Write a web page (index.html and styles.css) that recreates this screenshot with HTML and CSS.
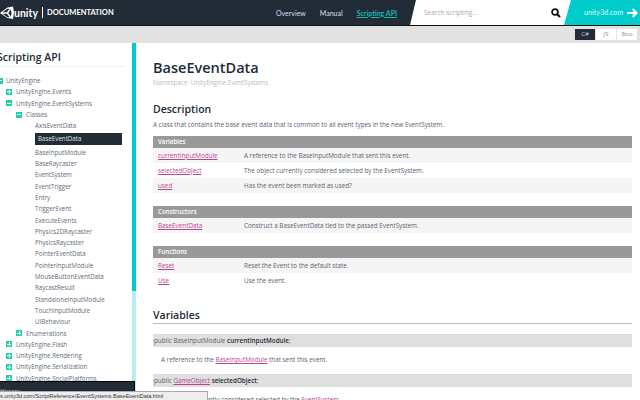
FILE: index.html
```html
<!DOCTYPE html>
<html lang="en">
<head>
<meta charset="utf-8">
<title>BaseEventData</title>
<link rel="stylesheet" href="styles.css">
</head>
<body>
<header class="header">
  <div class="brand">
    <svg class="logo" width="14" height="14" viewBox="0 0 14 14"><path d="M0 7 7.500 1.500 13 .5l1 6-1 6.500-5.500-1z" fill="#fff"/><path d="M2.500 6.200 7.500 2.800l2 .1L6.800 6.200zM2.500 7.800 7.500 11.200l2-.1L6.800 7.800zM8.300 7 10.700 3.500l.9 3.500-.9 3.500z" fill="#222c37"/></svg>
    <span class="word">unity</span>
    <span class="sep"></span>
    <span class="doc">DOCUMENTATION</span>
  </div>
  <nav class="nav">
    <a>Overview</a>
    <a>Manual</a>
    <a class="active">Scripting API</a>
  </nav>
  <div class="search">
    <span class="ph">Search scripting...</span>
    <svg width="10" height="10" viewBox="0 0 10 10"><circle cx="4" cy="4" r="2.900" fill="none" stroke="#111" stroke-width="1.800"/><path d="M6 6l3 3" stroke="#111" stroke-width="2.200"/></svg>
  </div>
  <div class="site">
    <span>unity3d.com</span>
    <svg width="11" height="10" viewBox="0 0 11 10"><path d="M0 5h8M5.500 1 9.500 5 5.500 9" fill="none" stroke="#fff" stroke-width="2.200"/></svg>
  </div>
</header>
<div class="langbar">
  <span class="lang on">C#</span><span class="lang">JS</span><span class="lang">Boo</span>
</div>
<div class="main">
  <aside class="side">
    <div class="side-inner">
      <h2 class="side-title">Scripting API</h2>
      <ul class="tree">
        <li class="n0"><i class="box minus"></i>UnityEngine</li>
        <li class="n1"><i class="box"></i>UnityEngine.Events</li>
        <li class="n1"><i class="box minus"></i>UnityEngine.EventSystems</li>
        <li class="n2"><i class="box minus"></i>Classes</li>
        <li class="n3">AxisEventData</li>
        <li class="n3 sel"><span>BaseEventData</span></li>
        <li class="n3">BaseInputModule</li>
        <li class="n3">BaseRaycaster</li>
        <li class="n3">EventSystem</li>
        <li class="n3">EventTrigger</li>
        <li class="n3">Entry</li>
        <li class="n3">TriggerEvent</li>
        <li class="n3">ExecuteEvents</li>
        <li class="n3">Physics2DRaycaster</li>
        <li class="n3">PhysicsRaycaster</li>
        <li class="n3">PointerEventData</li>
        <li class="n3">PointerInputModule</li>
        <li class="n3">MouseButtonEventData</li>
        <li class="n3">RaycastResult</li>
        <li class="n3">StandaloneInputModule</li>
        <li class="n3">TouchInputModule</li>
        <li class="n3">UIBehaviour</li>
        <li class="n2"><i class="box"></i>Enumerations</li>
        <li class="n1"><i class="box"></i>UnityEngine.Flash</li>
        <li class="n1"><i class="box"></i>UnityEngine.Rendering</li>
        <li class="n1"><i class="box"></i>UnityEngine.Serialization</li>
        <li class="n1"><i class="box"></i>UnityEngine.SocialPlatforms</li>
      </ul>
    </div>
    <div class="track"><div class="thumb"></div></div>
    <div class="history">History</div>
  </aside>
  <main class="content">
    <h1 class="title">BaseEventData</h1>
    <p class="ns">Namespace: UnityEngine.EventSystems</p>
    <h3 class="h-desc">Description</h3>
    <p class="lead">A class that contains the base event data that is common to all event types in the new EventSystem.</p>
    <section class="tbl">
      <div class="th">Variables</div>
      <div class="tr"><a>currentInputModule</a><span>A reference to the BaseInputModule that sent this event.</span></div>
      <div class="tr"><a>selectedObject</a><span>The object currently considered selected by the EventSystem.</span></div>
      <div class="tr"><a>used</a><span>Has the event been marked as used?</span></div>
    </section>
    <section class="tbl">
      <div class="th">Constructors</div>
      <div class="tr"><a>BaseEventData</a><span>Construct a BaseEventData tied to the passed EventSystem.</span></div>
    </section>
    <section class="tbl">
      <div class="th">Functions</div>
      <div class="tr"><a>Reset</a><span>Reset the Event to the default state.</span></div>
      <div class="tr"><a>Use</a><span>Use the event.</span></div>
    </section>
    <h3 class="h-vars">Variables</h3>
    <div class="sig first">public BaseInputModule <b>currentInputModule</b>;</div>
    <p class="sigdesc">A reference to the <a>BaseInputModule</a> that sent this event.</p>
    <div class="sig">public <a>GameObject</a> <b>selectedObject</b>;</div>
    <p class="sigdesc">The object currently considered selected by the <a>EventSystem</a>.</p>
  </main>
</div>
<div class="status">s.unity3d.com/ScriptReference/EventSystems.BaseEventData.html</div>
</body>
</html>
```
FILE: styles.css
```css
* { box-sizing: border-box; }
html, body { margin: 0; height: 400px; overflow: hidden; }
body { font-family: "Open Sans", sans-serif; font-size: 7px; color: #566472; background: #fff; }
ul { list-style: none; margin: 0; padding: 0; }
p, h1, h2, h3 { margin: 0; }
a { color: #bb4690; text-decoration: underline; }

.header { height: 26px; display: flex; background: #222c37; border-bottom: 1px solid #111; overflow: hidden; }
.brand { width: 260px; display: flex; align-items: center; flex: none; color: #fff; }
.logo { flex: none; }
.word { font-family: Lato, sans-serif; font-size: 10.500px; font-weight: 700; margin-left: 0; width: 27px; }
.sep { width: 1px; height: 11px; background: #fff; margin: 0 4px 0 1px; }
.doc { font-family: Lato, sans-serif; font-size: 7.500px; font-weight: 700; }
.nav { width: 150px; display: flex; gap: 14px; align-items: center; padding-left: 16px; flex: none; font-family: Lato, sans-serif; font-size: 7px; color: #dde; }
.nav a { text-decoration: none; color: inherit; }
.nav a.active { color: #19b5b5; font-weight: 700; text-decoration: underline; }
.search { width: 164px; flex: none; background: #fff; clip-path: polygon(6px 0, 100% 0, 100% 100%, 0 100%); display: flex; align-items: center; justify-content: space-between; padding: 0 13px 0 14px; color: #aaa; font-size: 6.500px; }
.site { flex: 1; background: #00cccc; margin-left: -10px; clip-path: polygon(7px 0, 100% 0, 100% 100%, 0 100%); display: flex; align-items: center; gap: 4px; padding-left: 20px; color: #dff; font-family: Lato, sans-serif; font-size: 7.200px; }

.langbar { height: 17px; background: #e2e2e2; display: flex; justify-content: flex-end; align-items: center; gap: 1px; padding-right: 3px; }
.lang { width: 20px; height: 11px; background: #fff; color: #8a949e; text-align: center; font-size: 6px; line-height: 11px; }
.lang.on { background: #222c37; color: #ccd; }

.main { display: flex; height: 357px; }
.side { width: 136px; flex: none; position: relative; overflow: hidden; }
.side-inner { padding-top: 7px; height: 100%; }
.side-title { font-size: 10.500px; font-weight: 600; color: #222c37; margin: 0 11px 0 -3px; height: 17px; line-height: 15px; border-bottom: 1px solid #f0f0f0; }
.tree { padding-top: 8px; }
.tree li { height: 11.300px; line-height: 11.300px; font-size: 6.200px; color: #5f6b78; white-space: nowrap; display: flex; align-items: center; }
.n1 { padding-left: 6px; }
.n2 { padding-left: 16px; }
.n3 { padding-left: 35px; }
.box { width: 6px; height: 6px; background: #1fd1a8; margin-right: 4px; flex: none; position: relative; }
.n0 .box { margin: 0 3px 0 -3px; }
.box::before { content: ""; position: absolute; left: 1px; right: 1px; top: 2.500px; height: 1px; background: #fff; }
.box::after { content: ""; position: absolute; top: 1px; bottom: 1px; left: 2.500px; width: 1px; background: #fff; }
.box.minus::after { display: none; }
.tree .sel { margin: 2px 0; }
.sel span { display: block; width: 87px; height: 12px; line-height: 12px; background: #222c37; color: #dfe3e8; padding-left: 3px; }
.track { position: absolute; right: 0; top: 0; bottom: 0; width: 4px; background: #b5efef; }
.thumb { height: 248px; background: #00cccc; }
.history { position: absolute; left: -1px; top: 338px; width: 136px; height: 19px; background: #222c37; border: 1px solid #000; color: #ccc; font-size: 6px; line-height: 18px; }

.content { flex: 1; padding: 15px 8px 0 17px; overflow: hidden; }
.title { font-size: 14.500px; font-weight: 600; color: #222c37; line-height: 20px; }
.ns { font-size: 6.300px; color: #b9bdc2; line-height: 9px; }
.h-desc { font-size: 10.500px; font-weight: 600; color: #222c37; line-height: 14px; margin-top: 15px; }
.lead { font-size: 6.300px; line-height: 10px; margin-top: 4px; }
.tbl { margin-top: 6px; }
.tbl + .tbl { margin-top: 13px; }
.th { height: 11.500px; line-height: 11.500px; background: #999; color: #fff; font-size: 6.200px; font-weight: 600; padding-left: 5px; }
.tr { height: 15.300px; display: flex; align-items: center; padding-left: 5px; font-size: 6.300px; }
.tr:nth-child(even) { background: #f5f5f5; }
.tr a { width: 86px; flex: none; }
.h-vars { font-size: 10.500px; font-weight: 600; color: #222c37; line-height: 16px; margin-top: 19px; border-bottom: 1px solid #bbb; }
.sig { height: 13px; line-height: 13px; background: #dfdfdf; font-size: 6.300px; padding-left: 1px; margin-top: 9px; }
.sig.first { margin-top: 10px; }
.sig b { color: #222c37; font-weight: 600; }
.sigdesc { font-size: 6.300px; line-height: 10px; margin: 8px 0 0 8px; }

.status { position: absolute; left: 0; bottom: 0; width: 208px; height: 9px; background: #eee; border: 1px solid #aaa; border-left: 0; border-bottom: 0; font-family: "Liberation Sans", sans-serif; font-size: 5.500px; line-height: 8px; color: #333; white-space: nowrap; overflow: hidden; }
```
